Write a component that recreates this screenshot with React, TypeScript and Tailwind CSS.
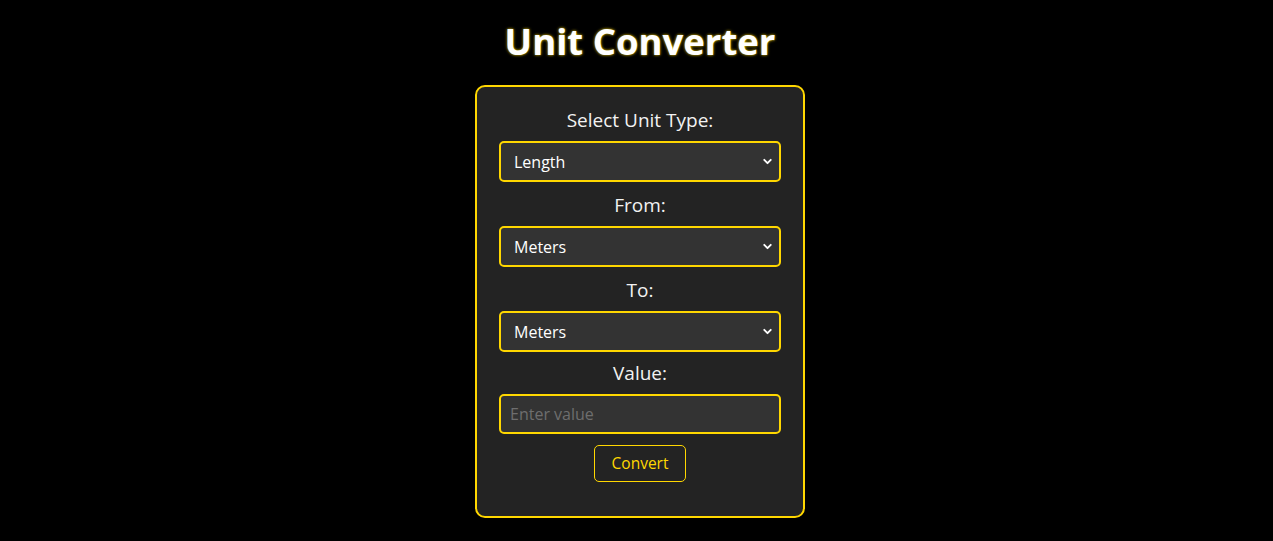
import { ChevronDown } from "lucide-react";

const font = { fontFamily: '"Open Sans", "Liberation Sans", sans-serif' };

function SelectField({ label, value, options }: { label: string; value: string; options: string[] }) {
  return (
    <div className="flex flex-col">
      <label className="mb-[10px] text-center text-[19px] leading-[22px] text-[#f2f2f2]">{label}</label>
      <div className="relative mb-[12px]">
        <select
          defaultValue={value}
          className="h-[41px] w-full appearance-none rounded-[5px] border-2 border-[#ffd700] bg-[#333333] pl-[13px] text-[16px] text-white outline-none"
          style={font}
        >
          {options.map((o) => (
            <option key={o}>{o}</option>
          ))}
        </select>
        <ChevronDown
          size={13}
          strokeWidth={3.5}
          className="pointer-events-none absolute right-[7px] top-[14px] text-white"
          aria-hidden="true"
        />
      </div>
    </div>
  );
}

export default function App() {
  return (
    <main className="min-h-screen bg-black" style={font}>
      <div className="mx-auto flex w-full flex-col items-center pl-[7px] pt-[18px]">
        <h1 className="mb-[21px] text-[36.5px] font-bold leading-[46px] text-white [text-shadow:0_0_3px_#ffd700]">
          Unit Converter
        </h1>
        <div className="w-[330px] rounded-[10px] border-2 border-[#ffd700] bg-[#232323] px-[22px] pt-[22px] pb-[34px]">
          <SelectField label="Select Unit Type:" value="Length" options={["Length", "Weight", "Temperature"]} />
          <SelectField label="From:" value="Meters" options={["Meters", "Kilometers", "Centimeters"]} />
          <SelectField label="To:" value="Meters" options={["Meters", "Kilometers", "Centimeters"]} />
          <div className="-mt-[2px] flex flex-col">
            <label className="mb-[10px] text-center text-[19px] leading-[22px] text-[#f2f2f2]">Value:</label>
            <input
              placeholder="Enter value"
              className="mb-[11px] h-[40px] w-full rounded-[5px] border-2 border-[#ffd700] bg-[#333333] px-[9px] text-[16px] text-white outline-none placeholder:text-[#6e6e6e]"
              style={font}
            />
          </div>
          <div className="flex justify-center">
            <button
              className="h-[37px] w-[92px] rounded-[5px] border border-[#ffd700] bg-transparent text-[15.5px] text-[#ffd700]"
              style={font}
            >
              Convert
            </button>
          </div>
        </div>
      </div>
    </main>
  );
}
